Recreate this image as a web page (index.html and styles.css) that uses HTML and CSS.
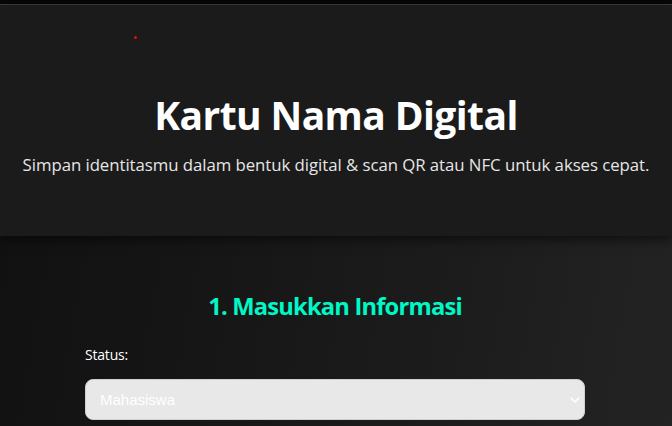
FILE: index.html
```html
<!DOCTYPE html>
<html lang="id">
<head>
<meta charset="utf-8">
<title>Kartu Nama Digital</title>
<link rel="stylesheet" href="styles.css">
</head>
<body>
<div class="topbar"></div>
<header class="hero">
  <span class="dot"></span>
  <h1 class="hero-title">Kartu Nama Digital</h1>
  <p class="hero-sub">Simpan identitasmu dalam bentuk digital &amp; scan QR atau NFC untuk akses cepat.</p>
</header>
<main class="content">
  <section class="form">
    <h2 class="form-title">1. Masukkan Informasi</h2>
    <label class="field-label" for="status">Status:</label>
    <div class="select-wrap">
      <select id="status" class="select">
        <option>Mahasiswa</option>
        <option>Dosen</option>
        <option>Umum</option>
      </select>
      <svg class="chev" width="10" height="6" viewBox="0 0 10 6"><path d="M1 1l4 4 4-4" fill="none" stroke="#fff" stroke-width="1.6" stroke-linecap="round" stroke-linejoin="round"/></svg>
    </div>
  </section>
</main>
</body>
</html>
```
FILE: styles.css
```css
* { box-sizing: border-box; }
html, body { margin: 0; padding: 0; }
body {
  background: #141414;
  font-family: "Open Sans", "Noto Sans", sans-serif;
  color: #fff;
  min-height: 426px;
  overflow: hidden;
}
.topbar {
  height: 5px;
  background: #070707;
  border-bottom: 1px solid #3c3c3c;
}
.hero {
  position: relative;
  background: #1b1b1b;
  height: 231px;
  display: flex;
  flex-direction: column;
  align-items: center;
  padding-top: 86px;
  box-shadow: 0 4px 10px rgba(0,0,0,0.5);
  z-index: 1;
}
.dot {
  position: absolute;
  left: 134px;
  top: 31px;
  width: 3px;
  height: 3px;
  border-radius: 50%;
  background: #e01010;
}
.hero-title {
  margin: 0;
  font-size: 39px;
  line-height: 48px;
  font-weight: 700;
  letter-spacing: -0.6px;
}
.hero-sub {
  margin: 14px 0 0;
  font-size: 16.8px;
  line-height: 24px;
  color: #e6e6e6;
  letter-spacing: -0.05px;
}
.content {
  background: linear-gradient(100deg, #111 0%, #1a1a1a 55%, #232323 100%);
  height: 190px;
  padding-top: 54px;
}
.form {
  width: 500px;
  margin: 0 auto;
  display: flex;
  flex-direction: column;
  position: relative;
  left: -1px;
}
.form-title {
  margin: 0;
  text-align: center;
  color: #00f7c6;
  font-size: 23.7px;
  line-height: 32px;
  font-weight: 700;
  letter-spacing: -0.8px;
}
.field-label {
  margin-top: 23px;
  font-size: 14px;
  line-height: 20px;
  letter-spacing: -0.2px;
}
.select-wrap {
  position: relative;
  margin-top: 14px;
}
.select {
  appearance: none;
  -webkit-appearance: none;
  width: 100%;
  height: 41px;
  border: 1px solid #cfcfcf;
  border-radius: 8px;
  background: #e8e8e8;
  color: #fff;
  font-family: "Liberation Sans", Arial, sans-serif;
  font-size: 15px;
  padding: 0 14px;
}
.chev {
  position: absolute;
  right: 5px;
  top: 18px;
}
```
